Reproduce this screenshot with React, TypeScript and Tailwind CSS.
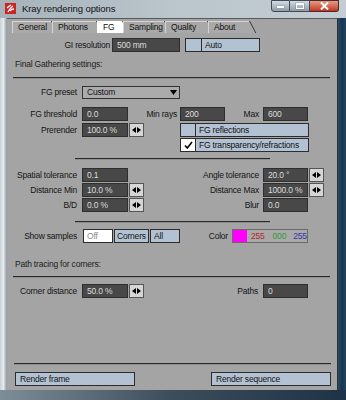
import React from "react";

const Input = ({ value, w }: { value: string; w: string }) => (
  <div className={`h-[14px] ${w} shrink-0 bg-[#484848] border border-[#2e2e2e] text-[#dcdcdc] pl-[4px] flex items-center leading-none whitespace-nowrap overflow-hidden`}>
    {value}
  </div>
);

const Spinner = () => (
  <div className="w-[15px] h-[14px] shrink-0 ml-[1px] bg-[#d6d6d6] border border-[#555] flex items-center justify-center">
    <svg width="9" height="6" viewBox="0 0 9 6">
      <path d="M0 3 L4 0 L4 6 Z M9 3 L5 0 L5 6 Z" fill="#000" />
    </svg>
  </div>
);

const SpinSlot = () => <div className="w-[15px] h-[14px] shrink-0 ml-[1px]" />;

const Label = ({ text, w }: { text: string; w: string }) => (
  <div className={`${w} shrink-0 text-right whitespace-nowrap leading-none`}>{text}</div>
);

const Divider = ({ cls }: { cls: string }) => (
  <div className={`${cls} h-[2px] border-t border-[#2a2a2a] border-b border-b-[#8e8e8e] shrink-0`} />
);

const Check = ({ checked, label, w }: { checked: boolean; label: string; w: string }) => (
  <div className="flex h-[14px] shrink-0">
    <div className={`w-[16px] h-full border border-[#2c2c2c] flex items-center justify-center ${checked ? "bg-white" : "bg-[#b3c2d3]"}`}>
      {checked && (
        <svg width="9" height="8" viewBox="0 0 9 8">
          <path d="M1 4.5 L3.3 7 L8 1" stroke="#000" strokeWidth="1.6" fill="none" />
        </svg>
      )}
    </div>
    <div className={`${w} h-full border border-l-0 border-[#2c2c2c] bg-[#b3c2d3] pl-[3px] flex items-center leading-none text-[#111] whitespace-nowrap`}>
      {label}
    </div>
  </div>
);

const Tab = ({ label, w, active }: { label: string; w: string; active?: boolean }) => (
  <div className={`relative ${w} h-[12px] shrink-0 flex items-center leading-none`}>
    <div className={`absolute inset-0 ${active ? "bg-white" : "bg-[#a9a9a9] border-t border-l border-[#d4d4d4]"}`} />
    <svg className="absolute right-[-6px] top-0" width="7" height="12" viewBox="0 0 7 12">
      <path d="M0 0 L1 0 L7 12 L0 12 Z" fill={active ? "#ffffff" : "#a9a9a9"} />
      <path d="M0.5 0 L6.8 12" stroke="#3a3a3a" strokeWidth="1" />
    </svg>
    <span className="relative pl-[6px] text-[#111] whitespace-nowrap">{label}</span>
  </div>
);

export default function App() {
  return (
    <div
      className="w-[346px] h-[400px] flex flex-col bg-[#aeb9c0] overflow-hidden text-[8.5px] tracking-[-0.2px] text-[#141414] font-['Liberation_Sans',Arial,sans-serif]"
    >
      {/* Title bar */}
      <div className="h-[18px] flex items-start bg-gradient-to-r from-[#a7b3bb] via-[#bac5cc] to-[#c4cdd3] shrink-0">
        <div className="mt-[3px] ml-[5px] w-[11px] h-[11px] bg-[#cc2222] flex items-center justify-center">
          <svg width="11" height="11" viewBox="0 0 11 11">
            <rect width="11" height="11" fill="#cf2222" />
            <path d="M3 9 C4 6 5 5 8 3 M5 8 C6 6 7 6 9 6 M2 5 C3 4 4 3 6 2" stroke="#fff" strokeWidth="1.3" fill="none" />
          </svg>
        </div>
        <div className="ml-[6px] mt-[3px] text-[9.5px] tracking-[-0.1px] leading-[12px] text-[#111] whitespace-nowrap">Kray rendering options</div>
        <div className="flex-1" />
        <div className="flex mr-[7px] h-[12px]">
          <div className="w-[19px] h-full bg-gradient-to-b from-[#d4dce2] to-[#8f9daa] border border-[#3d4a55] rounded-bl-[3px] flex items-center justify-center">
            <div className="w-[7px] h-[2px] bg-white mt-[2px] shadow-[0_0_1px_#333]" />
          </div>
          <div className="w-[20px] h-full bg-gradient-to-b from-[#d4dce2] to-[#8f9daa] border border-l-0 border-[#3d4a55] flex items-center justify-center">
            <div className="w-[8px] h-[6px] border border-white border-t-2 shadow-[0_0_1px_#333]" />
          </div>
          <div className="w-[29px] h-full bg-gradient-to-b from-[#e49a88] to-[#c2321c] border border-l-0 border-[#4a2a25] rounded-br-[3px] flex items-center justify-center">
            <svg width="9" height="8" viewBox="0 0 9 8">
              <path d="M1 0.5 L8 7.5 M8 0.5 L1 7.5" stroke="#fff" strokeWidth="2" />
            </svg>
          </div>
        </div>
      </div>

      <div className="flex flex-1">
        {/* left frame */}
        <div className="w-[7px] bg-gradient-to-r from-[#c9d1d6] via-[#e6ebee] to-[#8996a0]" />
        {/* client */}
        <div className="w-[331px] bg-[#a4a4a4] border-t border-[#5a5a5a] border-r border-r-[#2e2e2e] flex flex-col pt-[2px] pb-[4px]">
          {/* tabs */}
          <div className="flex h-[12px] ml-[5px] shrink-0">
            <Tab label="General" w="w-[40px]" />
            <Tab label="Photons" w="w-[45px]" />
            <Tab label="FG" w="w-[26px]" active />
            <Tab label="Sampling" w="w-[42px]" />
            <Tab label="Quality" w="w-[43px]" />
            <Tab label="About" w="w-[42px]" />
          </div>

          {/* GI resolution */}
          <div className="flex items-center h-[14px] mt-[5px] shrink-0">
            <Label text="GI resolution" w="w-[103px]" />
            <div className="ml-[2px]">
              <Input value="500 mm" w="w-[68px]" />
            </div>
            <div className="ml-[5px] w-[17px] h-[14px] bg-[#b3c2d3] border border-[#2c2c2c]" />
            <div className="w-[58px] h-[14px] bg-[#b3c2d3] border border-l-0 border-[#2c2c2c] pl-[3px] flex items-center leading-none">
              Auto
            </div>
          </div>

          <div className="mt-[7px] h-[10px] ml-[8px] leading-[10px] text-[#1c1c1c] shrink-0">Final Gathering settings:</div>
          <Divider cls="mt-[8px] ml-[6px] mr-[7px]" />

          {/* FG preset */}
          <div className="flex items-center h-[13px] mt-[7px] shrink-0">
            <Label text="FG preset" w="w-[70px]" />
            <div className="ml-[5px] w-[98px] h-[13px] bg-[#ababab] border border-[#333] pl-[4px] flex items-center leading-none relative">
              Custom
              <svg className="absolute right-[2px] top-[3px]" width="7" height="5" viewBox="0 0 7 5">
                <path d="M0 0 L7 0 L3.5 5 Z" fill="#000" />
              </svg>
            </div>
          </div>

          {/* FG threshold */}
          <div className="flex items-center h-[14px] mt-[8px] shrink-0">
            <Label text="FG threshold" w="w-[70px]" />
            <div className="ml-[5px]"><Input value="0.0" w="w-[46px]" /></div>
            <Label text="Min rays" w="w-[49px]" />
            <div className="ml-[3px]"><Input value="200" w="w-[45px]" /></div>
            <div className="flex-1 text-right leading-none">Max</div>
            <div className="ml-[4px]"><Input value="600" w="w-[45px]" /></div>
            <SpinSlot />
            <div className="w-[13px] shrink-0" />
          </div>

          {/* Prerender */}
          <div className="flex items-center h-[14px] mt-[2px] shrink-0">
            <Label text="Prerender" w="w-[70px]" />
            <div className="ml-[5px]"><Input value="100.0 %" w="w-[46px]" /></div>
            <Spinner />
            <div className="ml-[36px]">
              <Check checked={false} label="FG reflections" w="w-[113px]" />
            </div>
          </div>

          <div className="flex items-center h-[14px] mt-[1px] shrink-0">
            <div className="ml-[173px]">
              <Check checked label="FG transparency/refractions" w="w-[113px]" />
            </div>
          </div>

          <Divider cls="mt-[6px] ml-[68px] w-[195px]" />

          {/* Spatial / Angle */}
          <div className="flex items-center h-[14px] mt-[8px] shrink-0">
            <Label text="Spatial tolerance" w="w-[70px]" />
            <div className="ml-[5px]"><Input value="0.1" w="w-[46px]" /></div>
            <SpinSlot />
            <div className="flex-1 text-right leading-none whitespace-nowrap">Angle tolerance</div>
            <div className="ml-[4px]"><Input value="20.0 °" w="w-[45px]" /></div>
            <Spinner />
            <div className="w-[13px] shrink-0" />
          </div>

          <div className="flex items-center h-[14px] mt-[1px] shrink-0">
            <Label text="Distance Min" w="w-[70px]" />
            <div className="ml-[5px]"><Input value="10.0 %" w="w-[46px]" /></div>
            <Spinner />
            <div className="flex-1 text-right leading-none whitespace-nowrap">Distance Max</div>
            <div className="ml-[4px]"><Input value="1000.0 %" w="w-[45px]" /></div>
            <Spinner />
            <div className="w-[13px] shrink-0" />
          </div>

          <div className="flex items-center h-[14px] mt-[1px] shrink-0">
            <Label text="B/D" w="w-[70px]" />
            <div className="ml-[5px]"><Input value="0.0 %" w="w-[46px]" /></div>
            <Spinner />
            <div className="flex-1 text-right leading-none">Blur</div>
            <div className="ml-[4px]"><Input value="0.0" w="w-[45px]" /></div>
            <SpinSlot />
            <div className="w-[13px] shrink-0" />
          </div>

          <Divider cls="mt-[9px] ml-[68px] w-[195px]" />

          {/* Show samples */}
          <div className="flex items-center h-[14px] mt-[6px] shrink-0">
            <Label text="Show samples" w="w-[70px]" />
            <div className="ml-[6px] flex h-[14px]">
              <div className="w-[30px] h-full bg-white border border-[#2c2c2c] pl-[3px] flex items-center leading-none text-[#8a8a8a]">Off</div>
              <div className="w-[35px] h-full ml-[1px] bg-[#b3c2d3] border border-[#2c2c2c] pl-[2px] flex items-center leading-none">Corners</div>
              <div className="w-[30px] h-full ml-[1px] bg-[#b3c2d3] border border-[#2c2c2c] pl-[3px] flex items-center leading-none">All</div>
            </div>
            <div className="flex-1 text-right leading-none">Color</div>
            <div className="ml-[4px] w-[76px] h-[14px] bg-[#a9a9a9] border border-[#6a6a6a] flex items-center leading-none">
              <div className="w-[14px] h-full bg-[#ff00ff]" />
              <span className="ml-[4px] text-[#b02828]">255</span>
              <span className="ml-[8px] text-[#2f9a36]">000</span>
              <span className="ml-[7px] text-[#2f36b0]">255</span>
            </div>
            <div className="w-[29px] shrink-0" />
          </div>

          <div className="mt-[16px] h-[10px] ml-[8px] leading-[10px] text-[#1c1c1c] shrink-0">Path tracing for corners:</div>
          <Divider cls="mt-[7px] ml-[6px] mr-[7px]" />

          {/* Corner distance */}
          <div className="flex items-center h-[14px] mt-[6px] shrink-0">
            <Label text="Corner distance" w="w-[70px]" />
            <div className="ml-[5px]"><Input value="50.0 %" w="w-[46px]" /></div>
            <Spinner />
            <div className="flex-1 text-right leading-none">Paths</div>
            <div className="ml-[5px]"><Input value="0" w="w-[45px]" /></div>
            <SpinSlot />
            <div className="w-[13px] shrink-0" />
          </div>

          <div className="flex-1" />
          <Divider cls="ml-[7px] mr-[6px]" />

          <div className="flex items-center h-[14px] mt-[7px] shrink-0">
            <div className="ml-[8px] w-[120px] h-[14px] bg-[#b3c2d3] border border-[#2c2c2c] pl-[4px] flex items-center leading-none">Render frame</div>
            <div className="flex-1" />
            <div className="w-[120px] h-[14px] bg-[#b3c2d3] border border-[#2c2c2c] pl-[4px] flex items-center leading-none">Render sequence</div>
            <div className="w-[6px] shrink-0" />
          </div>
        </div>
        {/* right frame */}
        <div className="w-[8px] bg-gradient-to-r from-[#2a4b66] via-[#163650] to-[#24445c]" />
      </div>
      <div className="h-[10px] shrink-0 bg-gradient-to-r from-[#7e8e98] via-[#3c4d5a] to-[#1f3346]" />
    </div>
  );
}
